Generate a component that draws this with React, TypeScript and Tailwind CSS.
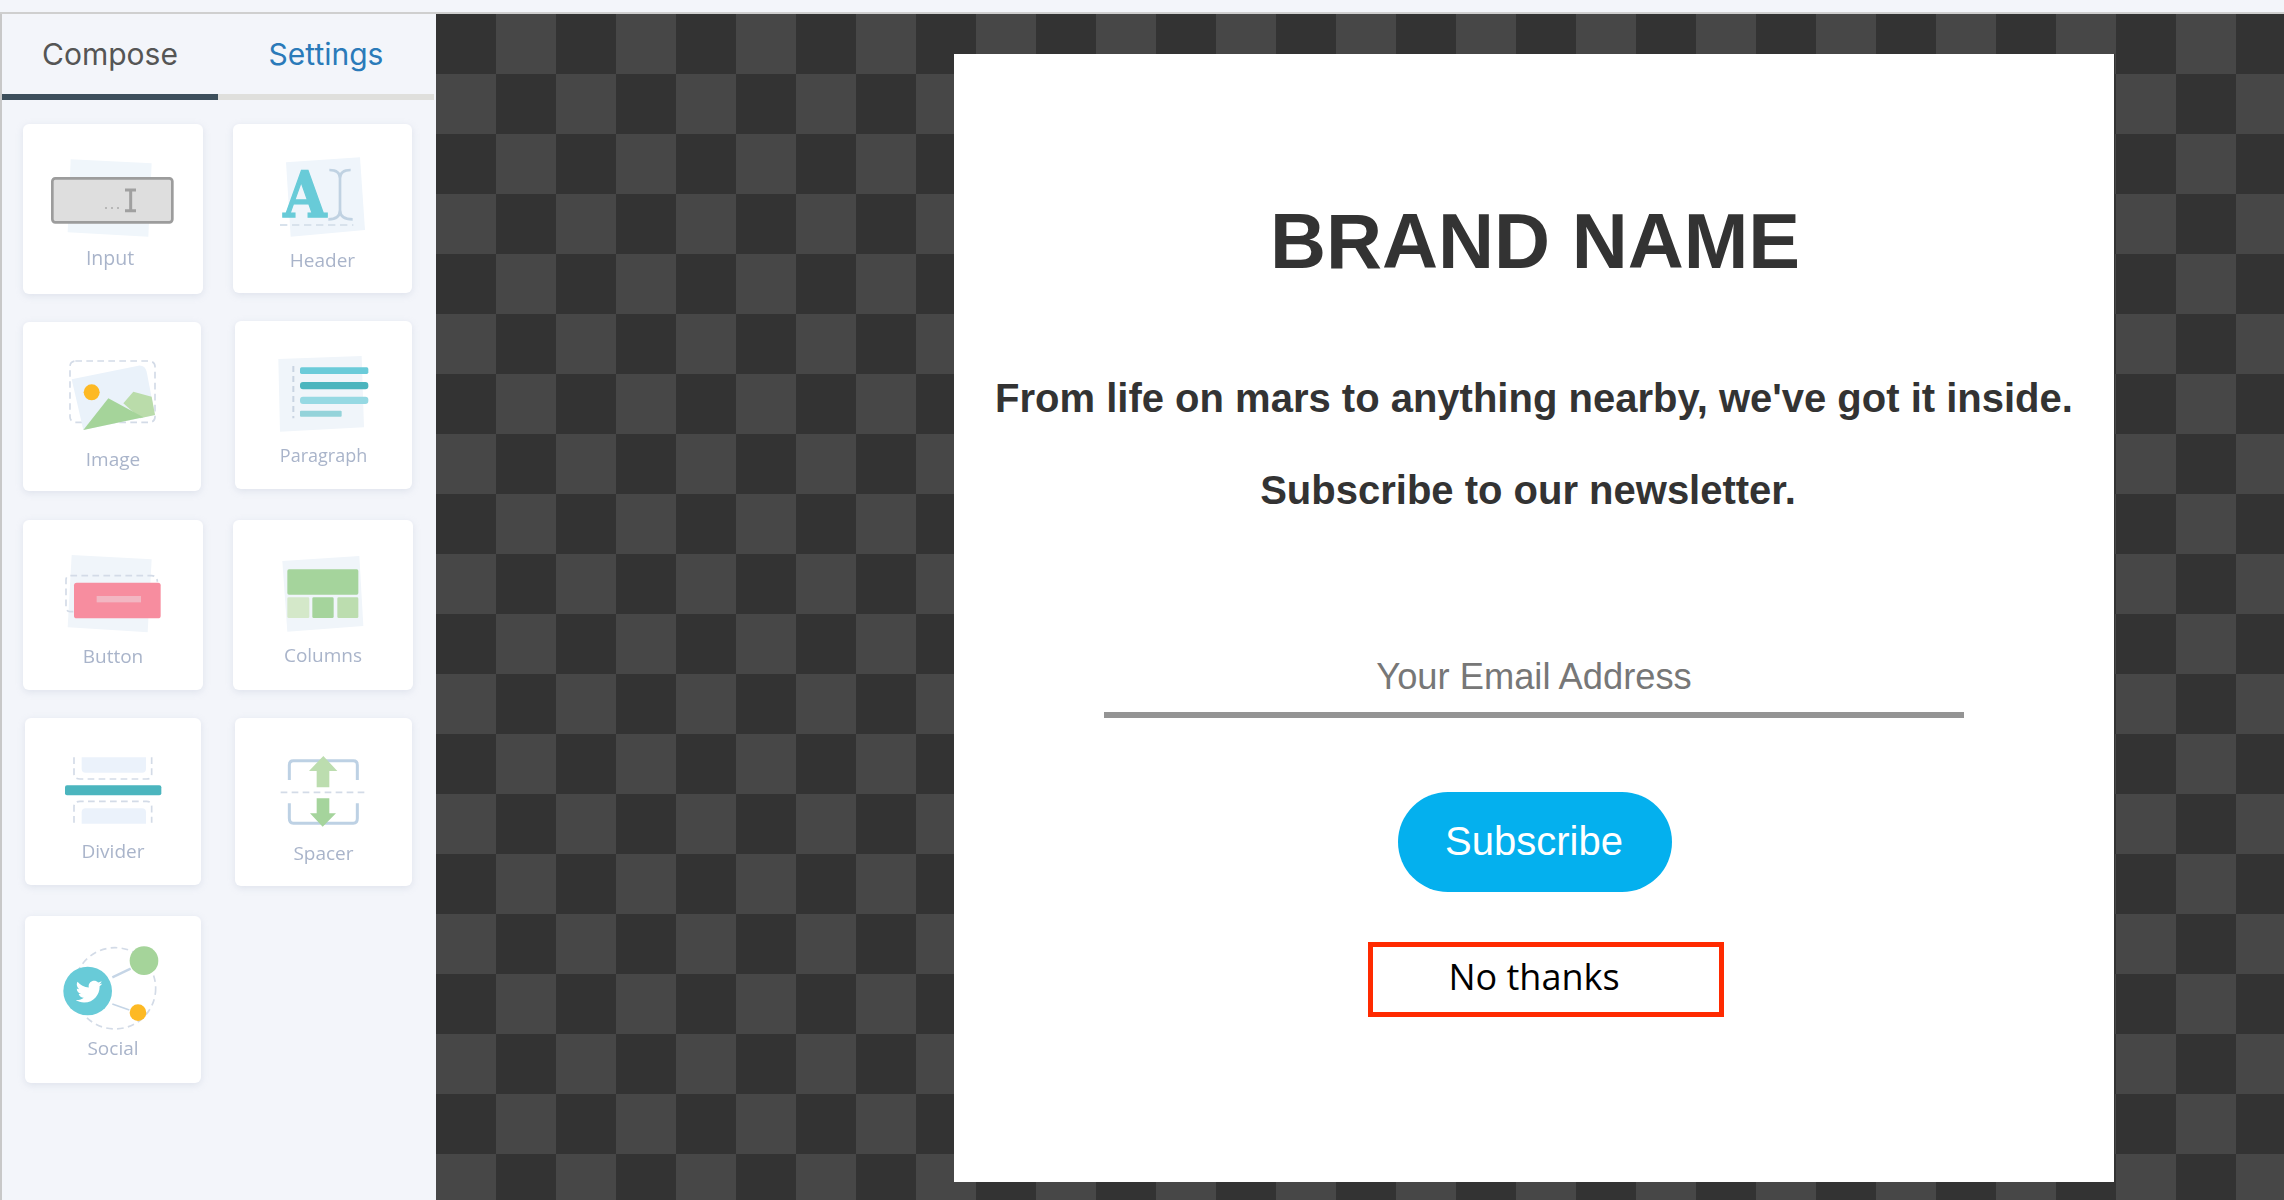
import { ReactNode } from 'react';
import { FaTwitter } from 'react-icons/fa';

const dash = { fill: 'none', stroke: '#d3dbe7', strokeWidth: 5, strokeDasharray: '20 13' };

function Card({ className, svgClass, viewBox, label, labelClass, children }: {
  className: string;
  svgClass: string;
  viewBox: string;
  label: string;
  labelClass?: string;
  children: ReactNode;
}) {
  return (
    <div className={`rounded-[6px] bg-white shadow-[0_2px_7px_rgba(170,180,200,0.28)] ${className}`}>
      <svg viewBox={viewBox} className={`block blur-[0.6px] ${svgClass}`}>{children}</svg>
      <div className={`h-[24px] text-center font-['Open_Sans',sans-serif] leading-[24px] text-[#a9b4ca] blur-[0.6px] ${labelClass ?? 'text-[19px]'}`}>
        {label}
      </div>
    </div>
  );
}

function Sidebar() {
  return (
    <aside className="h-full w-[434px] shrink-0 border-l-2 border-[#c8c8c8] bg-[#f3f5fa]">
      {/* Tabs */}
      <div className="flex h-[86px] font-['Inter',sans-serif] text-[30px]">
        <div className="flex w-[216px] items-center justify-center border-b-[6px] border-[#3d4f5c] text-[#555555]">Compose</div>
        <div className="flex w-[216px] items-center justify-center border-b-[6px] border-[#dfdfdc] text-[#2a7ab9]">Settings</div>
      </div>

      {/* Blocks */}
      <div className="grid grid-cols-[210px_1fr] grid-rows-[197px_199px_198px_198px_auto] items-start pl-[21px] pt-[24px]">
        <Card className="h-[170px] w-[180px]" svgClass="h-[122px] w-[180px]" viewBox="69 372 540 366" label="Input" labelClass="pr-[6px] text-[19.5px]">
          <polygon points="212,478 455,490 445,710 203,697" fill="#f0f6fb" />
          <rect x="157" y="535" width="360" height="132" rx="9" fill="#dedede" stroke="#9c9c9c" strokeWidth="8" />
          <path d="M375 570H408M392 570V632M375 632H408" fill="none" stroke="#a0a0a0" strokeWidth="9" />
          <circle cx="318" cy="624" r="3" fill="#aaaaaa" />
          <circle cx="336" cy="624" r="3" fill="#aaaaaa" />
          <circle cx="354" cy="624" r="3" fill="#aaaaaa" />
        </Card>

        <Card className="h-[169px] w-[179px]" svgClass="h-[124px] w-[179px]" viewBox="699 372 537 372" label="Header">
          <polygon points="858,487 1080,472 1095,690 872,710" fill="#eff5fb" />
          <text x="850" y="652" textLength="130" lengthAdjust="spacingAndGlyphs" fontFamily="'DejaVu Serif',serif" fontWeight="700" fontSize="188" fill="#68cbd8" stroke="#68cbd8" strokeWidth="4">A</text>
          <path d="M988 510C1010 510 1020 520 1020 535V630C1020 650 1035 658 1058 658M1052 510C1030 510 1020 520 1020 535M1020 630C1020 650 1005 658 985 658" fill="none" stroke="#c0d2e2" strokeWidth="8" />
          <path d="M840 675H1060" stroke="#d8e2ec" strokeWidth="6" strokeDasharray="22 14" />
        </Card>

        <Card className="mt-[1px] h-[169px] w-[178px]" svgClass="h-[125px] w-[178px]" viewBox="69 66 534 375" label="Image" labelClass="pl-[2px] text-[19px]">
          <rect x="210" y="183" width="255" height="184" rx="16" {...dash} />
          <path d="M215 238L415 197Q435 195 440 215L465 345L250 390Z" fill="#eaf2fa" />
          <circle cx="275" cy="277" r="24" fill="#fdb924" />
          <polygon points="370,310 400,275 455,290 465,345 420,355" fill="#badcaa" />
          <polygon points="250,390 325,295 430,352" fill="#a5d49a" />
        </Card>

        <Card className="ml-[2px] h-[168px] w-[177px]" svgClass="h-[122px] w-[177px]" viewBox="705 63 531 366" label="Paragraph" labelClass="text-[18px]">
          <polygon points="835,177 1085,168 1092,382 840,395" fill="#f0f5fa" />
          <path d="M880 198V355" stroke="#c9d4e2" strokeWidth="6" strokeDasharray="18 12" />
          <rect x="900" y="202" width="205" height="20" rx="5" fill="#6bcbd9" />
          <rect x="900" y="246" width="205" height="22" rx="9" fill="#4bb5be" />
          <rect x="900" y="290" width="205" height="22" rx="9" fill="#96d9e3" />
          <rect x="900" y="332" width="125" height="18" rx="3" fill="#94d3da" />
        </Card>

        <Card className="h-[170px] w-[180px]" svgClass="h-[124px] w-[180px]" viewBox="69 660 540 372" label="Button">
          <polygon points="215,765 455,778 443,997 203,982" fill="#f0f5fa" />
          <path d="M220 935H210Q198 935 198 920V840Q198 827 212 827H455Q472 827 472 845" {...dash} />
          <rect x="222" y="848" width="260" height="107" rx="8" fill="#f78d9f" />
          <rect x="290" y="888" width="133" height="19" fill="#f2b6c2" />
        </Card>

        <Card className="h-[170px] w-[180px]" svgClass="h-[123px] w-[180px]" viewBox="699 660 540 369" label="Columns">
          <polygon points="847,783 1078,768 1090,978 862,995" fill="#f0f5fa" />
          <rect x="862" y="808" width="213" height="76" rx="5" fill="#a5d49c" />
          <rect x="862" y="892" width="66" height="62" rx="4" fill="#d4e8c9" />
          <rect x="937" y="892" width="64" height="62" rx="4" fill="#a5d49c" />
          <rect x="1012" y="892" width="63" height="62" rx="4" fill="#bcddaf" />
        </Card>

        <Card className="ml-[2px] h-[167px] w-[176px]" svgClass="h-[121px] w-[176px]" viewBox="75 54 528 363" label="Divider">
          <path d="M245 172H438V206Q438 218 426 218H257Q245 218 245 206Z" fill="#ebf2fb" />
          <path d="M222 172V222Q222 237 240 237H440Q455 237 455 222V172" {...dash} />
          <rect x="195" y="256" width="289" height="30" rx="6" fill="#4bb5be" />
          <path d="M222 368V320Q222 304 240 304H440Q455 304 455 320V368" {...dash} />
          <path d="M257 325H426Q438 325 438 337V371H245V337Q245 325 257 325Z" fill="#ebf2fb" />
        </Card>

        <Card className="ml-[2px] h-[168px] w-[177px]" svgClass="h-[123px] w-[177px]" viewBox="705 54 531 369" label="Spacer">
          <path d="M868 240V195Q868 182 880 182H1060Q1072 182 1072 195V240" fill="none" stroke="#bdd1e4" strokeWidth="9" />
          <path d="M868 310V355Q868 370 880 370H1060Q1072 370 1072 355V310" fill="none" stroke="#bdd1e4" strokeWidth="9" />
          <path d="M842 277H1098" {...dash} />
          <polygon points="970,168 1012,213 988,213 988,262 950,262 950,213 927,213" fill="#bcddaf" />
          <polygon points="950,295 988,295 988,340 1008,340 968,380 930,340 950,340" fill="#a5d49c" />
        </Card>

        <Card className="ml-[2px] h-[167px] w-[176px]" svgClass="h-[120px] w-[176px]" viewBox="75 648 528 360" label="Social">
          <circle cx="345" cy="865" r="122" {...dash} />
          <path d="M337 832L392 806" stroke="#c5d5e6" strokeWidth="7" />
          <path d="M337 912L388 930" stroke="#c5d5e6" strokeWidth="5" />
          <circle cx="263" cy="873" r="73" fill="#68cbd8" />
          <FaTwitter x="227" y="835" size={80} color="#ffffff" />
          <circle cx="432" cy="782" r="43" fill="#a5d49a" />
          <circle cx="414" cy="938" r="25" fill="#fdb924" />
        </Card>
      </div>
    </aside>
  );
}

export default function App() {
  return (
    <div className="flex h-[1200px] w-[2284px] flex-col overflow-hidden bg-[#f3f5fa]">
      <div className="h-[14px] shrink-0 border-b-2 border-[#cfcfcf]" />
      <div className="flex min-h-0 flex-1">
        <Sidebar />
        {/* Canvas */}
        <main className="ml-[2px] flex-1 bg-[conic-gradient(#474747_25%,#333333_0_50%,#474747_0_75%,#333333_0)] bg-[length:120px_120px] pl-[518px] pt-[40px]">
          <div className="flex h-[1128px] w-[1161px] flex-col items-center border-r border-[#333333] bg-white font-['Liberation_Sans',Arial,sans-serif]">
            <h1 className="mt-[142px] pl-[2px] text-[77.6px] font-bold leading-[90px] text-[#333333]">BRAND NAME</h1>
            <p className="mt-[87px] text-[40px] font-bold leading-[50px] text-[#333333]">From life on mars to anything nearby, we've got it inside.</p>
            <p className="mt-[42px] pr-[12px] text-[40px] font-bold leading-[50px] text-[#333333]">Subscribe to our newsletter.</p>
            <div className="mt-[140px] h-[63px] w-[860px] border-b-[6px] border-[#949494] pt-[2px] text-center text-[36.3px] leading-[40px] text-[#777777]">Your Email Address</div>
            <button className="mt-[74px] ml-[2px] h-[100px] w-[274px] rounded-[50px] bg-[#04b0ee] pb-[3px] pr-[2px] text-[40px] text-white">Subscribe</button>
            <button className="mt-[50px] ml-[24px] h-[75px] w-[356px] border-[5px] border-[#ff2a00] pb-[6px] pr-[24px] font-['Open_Sans',sans-serif] text-[36px] text-black">No thanks</button>
          </div>
        </main>
      </div>
    </div>
  );
}
